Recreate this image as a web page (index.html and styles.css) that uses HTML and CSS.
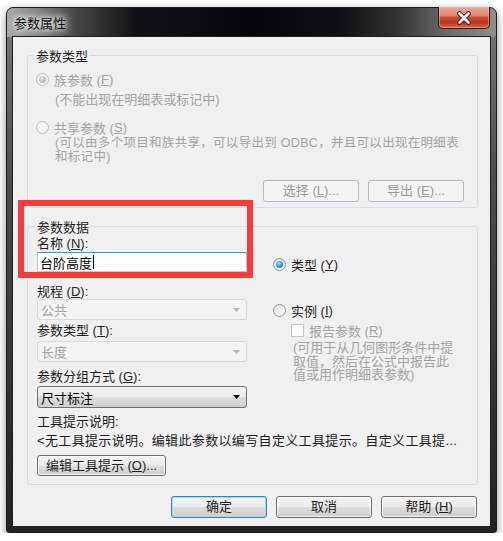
FILE: index.html
```html
<!DOCTYPE html>
<html lang="zh-CN">
<head>
    <meta charset="UTF-8">
    <meta name="viewport" content="width=device-width, initial-scale=1.0">
    <title>参数属性</title>
    <link rel="stylesheet" href="styles.css">
</head>
<body>
    <div class="window">
        <div class="titlebar">
            <span class="title">参数属性</span>
            <button class="close-btn" type="button" aria-label="关闭">
                <svg width="18" height="14" viewBox="0 0 18 14">
                    <path d="M4.5 2.5 L13.5 11.5 M13.5 2.5 L4.5 11.5" stroke="#4a1a12" stroke-width="4.6" stroke-linecap="round"/>
                    <path d="M4.5 2.5 L13.5 11.5 M13.5 2.5 L4.5 11.5" stroke="#fff" stroke-width="2.8" stroke-linecap="round"/>
                </svg>
            </button>
        </div>

        <div class="client">
            <div class="group group-type">
                <div class="group-title">参数类型</div>
                <div class="radio-row disabled">
                    <span class="radio checked"></span>族参数 (<u>F</u>)
                </div>
                <p class="hint hint-family">(不能出现在明细表或标记中)</p>
                <div class="radio-row disabled row-shared">
                    <span class="radio"></span>共享参数 (<u>S</u>)
                </div>
                <p class="hint hint-shared">(可以由多个项目和族共享，可以导出到 ODBC，并且可以出现在明细表<br>和标记中)</p>
                <div class="group-buttons">
                    <button class="btn" type="button" disabled>选择 (<u>L</u>)...</button>
                    <button class="btn" type="button" disabled>导出 (<u>E</u>)...</button>
                </div>
            </div>

            <div class="group group-data">
                <div class="group-title">参数数据</div>
                <div class="data-cols">
                    <div class="col-left">
                        <div class="field-label label-name">名称 (<u>N</u>):</div>
                        <div class="textbox"><span>台阶高度</span><span class="caret"></span></div>

                        <div class="field-label label-discipline">规程 (<u>D</u>):</div>
                        <div class="combo disabled">
                            <span>公共</span>
                            <svg width="7" height="4" viewBox="0 0 7 4"><path d="M0 0 H7 L3.5 4 Z" fill="#b4b4b4"/></svg>
                        </div>

                        <div class="field-label label-type">参数类型 (<u>T</u>):</div>
                        <div class="combo disabled combo-type">
                            <span>长度</span>
                            <svg width="7" height="4" viewBox="0 0 7 4"><path d="M0 0 H7 L3.5 4 Z" fill="#b4b4b4"/></svg>
                        </div>

                        <div class="field-label label-group">参数分组方式 (<u>G</u>):</div>
                        <div class="combo combo-group">
                            <span>尺寸标注</span>
                            <svg width="7" height="4" viewBox="0 0 7 4"><path d="M0 0 H7 L3.5 4 Z" fill="#000"/></svg>
                        </div>

                        <div class="field-label label-tooltip">工具提示说明:</div>
                        <div class="tooltip-text">&lt;无工具提示说明。编辑此参数以编写自定义工具提示。自定义工具提...</div>
                        <button class="btn btn-tooltip" type="button">编辑工具提示 (<u>O</u>)...</button>
                    </div>

                    <div class="col-right">
                        <div class="radio-row row-type">
                            <span class="radio checked"></span>类型 (<u>Y</u>)
                        </div>
                        <div class="radio-row row-instance">
                            <span class="radio"></span>实例 (<u>I</u>)
                        </div>
                        <div class="check-row disabled">
                            <span class="checkbox"></span>报告参数 (<u>R</u>)
                        </div>
                        <p class="hint hint-report">(可用于从几何图形条件中提<br>取值，然后在公式中报告此<br>值或用作明细表参数)</p>
                    </div>
                </div>
            </div>

            <div class="dialog-buttons">
                <button class="btn btn-default" type="button">确定</button>
                <button class="btn" type="button">取消</button>
                <button class="btn" type="button">帮助 (<u>H</u>)</button>
            </div>
        </div>
    </div>

    <!-- annotation box drawn over the dialog -->
    <div class="highlight"></div>
</body>
</html>
```

FILE: styles.css
```css
:root {
    --face-color: #f0f0f0;
    --text-color: #1e1e1e;
    --gray-text: #a3a3a3;
    --group-border: #d5dfe5;
    --mark-color: #fd3a3a;
}

/* Latin face first keeps the line boxes tight; CJK glyphs come from Noto */
body {
    margin: 0;
    background-color: #fff;
    font-family: "Liberation Sans", "Noto Sans CJK SC", sans-serif;
    font-size: 13px;
    color: var(--text-color);
}

button {
    font-family: inherit;
    font-size: 13px;
}

u {
    text-underline-offset: 1px;
}

/* window frame */

.window {
    box-sizing: border-box;
    width: 491px;
    height: 526px;
    margin: 7px 0 0 6px;
    padding: 0 5px 5px 5px;
    display: flex;
    flex-direction: column;
    border: 1px solid #1c1c1c;
    border-radius: 7px 7px 3px 3px;
    background:
        linear-gradient(90deg, #a9a9a9 0%, #8a8a8a 5%, #474747 14%, #121214 26%, #060608 50%, #0f0f11 68%, #333 80%, #666 89%, #8e8e8e 100%) top / 100% 29px no-repeat,
        linear-gradient(180deg, #7a7a7a 0%, #4a4a4a 35%, #222 100%);
    box-shadow: 0 3px 9px rgba(0,0,0,0.45);
}

.titlebar {
    height: 28px;
    display: flex;
    justify-content: space-between;
    align-items: flex-start;
    flex-shrink: 0;
}

.title {
    padding: 8px 0 0 2px;
    line-height: 15px;
    font-size: 13px;
    color: #111;
    text-shadow: 0 0 5px #fff, 0 0 9px rgba(255,255,255,0.9), 0 0 12px rgba(255,255,255,0.7);
}

.close-btn {
    width: 52px;
    height: 22px;
    margin: -1px 1px 0 0;
    padding: 0;
    display: flex;
    justify-content: center;
    align-items: center;
    border: 1px solid #3b1610;
    border-top: none;
    border-radius: 0 0 5px 5px;
    background: linear-gradient(180deg, #eaa898 0%, #de8a76 40%, #cc4a32 50%, #bc341e 75%, #dc6a48 100%);
    box-shadow: inset 0 0 0 1px rgba(255,200,180,0.45);
}

.client {
    flex: 1;
    padding: 18px 12px 0 14px;
    border: 1px solid #202020;
    background-color: var(--face-color);
}

/* group boxes */

.group {
    border: 1px solid var(--group-border);
    border-radius: 3px;
}

.group-title {
    width: fit-content;
    margin: -7px 0 0 -2px;
    padding: 0 2px;
    line-height: 15px;
    background-color: var(--face-color);
}

.group-type {
    padding: 0 13px 5px 8px;
}

.group-data {
    margin-top: 18px;
    padding: 0 13px 8px 9px;
}

.disabled {
    color: var(--gray-text);
}

.hint {
    margin: 0;
    color: var(--gray-text);
    white-space: nowrap;
}

/* radio buttons and check boxes */

.radio-row,
.check-row {
    display: flex;
    align-items: center;
    height: 16px;
    white-space: nowrap;
}

.radio {
    box-sizing: border-box;
    width: 13px;
    height: 13px;
    margin-right: 5px;
    border: 1px solid #8e8f8f;
    border-radius: 50%;
    background: linear-gradient(135deg, #dcdcdc 0%, #f3f3f3 60%, #fff 100%);
    display: flex;
    justify-content: center;
    align-items: center;
}

.radio.checked::after {
    content: "";
    width: 7px;
    height: 7px;
    border-radius: 50%;
    background: radial-gradient(circle at 40% 35%, #a9e1fb 0%, #3b9fdc 45%, #1a5b91 100%);
}

.disabled .radio {
    border-color: #bcbcbc;
    background: #f4f4f4;
}

.disabled .radio.checked::after {
    background: radial-gradient(circle at 40% 35%, #e6e6e6 0%, #bdbdbd 60%, #a8a8a8 100%);
}

.checkbox {
    box-sizing: border-box;
    width: 13px;
    height: 13px;
    margin-right: 5px;
    border: 1px solid #c4c4c4;
    background: #fbfbfb;
}

/* first group */

.group-type .radio-row {
    margin-top: 7px;
}

.hint-family {
    margin: 5px 0 0 19px;
    line-height: 15px;
}

.group-type .row-shared {
    margin-top: 12px;
}

.hint-shared {
    margin: 1px 0 0 19px;
    font-size: 12.5px;
    line-height: 14px;
    letter-spacing: 0.3px;
}

.group-buttons {
    display: flex;
    justify-content: flex-end;
    gap: 9px;
    margin-top: 16px;
}

/* buttons */

.btn {
    box-sizing: border-box;
    width: 96px;
    height: 22px;
    padding: 0;
    border: 1px solid #707070;
    border-radius: 3px;
    color: var(--text-color);
    line-height: 18px;
    background: linear-gradient(180deg, #f2f2f2 0%, #ebebeb 48%, #dddddd 52%, #cfcfcf 100%);
    box-shadow: inset 0 0 0 1px rgba(255,255,255,0.7);
}

.btn:disabled {
    border-color: #b6babc;
    color: #9a9a9a;
    background: #f4f4f4;
    box-shadow: none;
}

.btn-default {
    border-color: #3c7fb1;
    box-shadow: inset 0 0 0 1px #a6dcf7;
}

.btn-tooltip {
    width: 129px;
    height: 21px;
    margin-top: 7px;
}

/* second group */

.data-cols {
    display: flex;
    gap: 26px;
}

.col-left {
    width: 210px;
    flex-shrink: 0;
}

.field-label {
    line-height: 15px;
    white-space: nowrap;
}

.label-name { margin-top: 1px; }
.label-discipline { margin-top: 12px; }
.label-type { margin-top: 3px; }
.label-group { margin-top: 7px; }
.label-tooltip { margin-top: 6px; }

.textbox {
    box-sizing: border-box;
    height: 20px;
    margin-top: 1px;
    padding: 0 2px;
    display: flex;
    align-items: center;
    border: 1px solid #b5cfe7;
    border-top-color: #5b8fbd;
    background-color: #fff;
    color: #000;
    font-size: 13px;
}

.caret {
    width: 1px;
    height: 14px;
    margin-left: 1px;
    background-color: #000;
}

.combo {
    box-sizing: border-box;
    height: 21px;
    padding: 0 6px 0 3px;
    display: flex;
    justify-content: space-between;
    align-items: center;
    border: 1px solid #707070;
    border-radius: 3px;
    background: linear-gradient(180deg, #f2f2f2 0%, #ebebeb 48%, #dddddd 52%, #cfcfcf 100%);
    color: #000;
}

.combo.disabled {
    border-color: #d9d9d9;
    background: #f4f4f4;
    color: var(--gray-text);
}

.combo-type {
    margin-top: 3px;
}

.combo-group {
    height: 22px;
    margin-top: 2px;
}

.tooltip-text {
    margin-top: 4px;
    line-height: 15px;
    letter-spacing: 0.35px;
    white-space: nowrap;
}

.col-right .row-type {
    margin-top: 21px;
}

.col-right .row-instance {
    margin-top: 30px;
}

.check-row {
    height: 15px;
    margin: 5px 0 0 18px;
}

.hint-report {
    margin: 3px 0 0 20px;
    line-height: 13.5px;
}

/* dialog buttons */

.dialog-buttons {
    display: flex;
    justify-content: flex-end;
    gap: 9px;
    margin-top: 11px;
    padding-right: 1px;
}

/* red annotation frame */

.highlight {
    position: absolute;
    left: 18px;
    top: 200px;
    width: 235px;
    height: 78px;
    box-sizing: border-box;
    border: 6px solid var(--mark-color);
}
```
